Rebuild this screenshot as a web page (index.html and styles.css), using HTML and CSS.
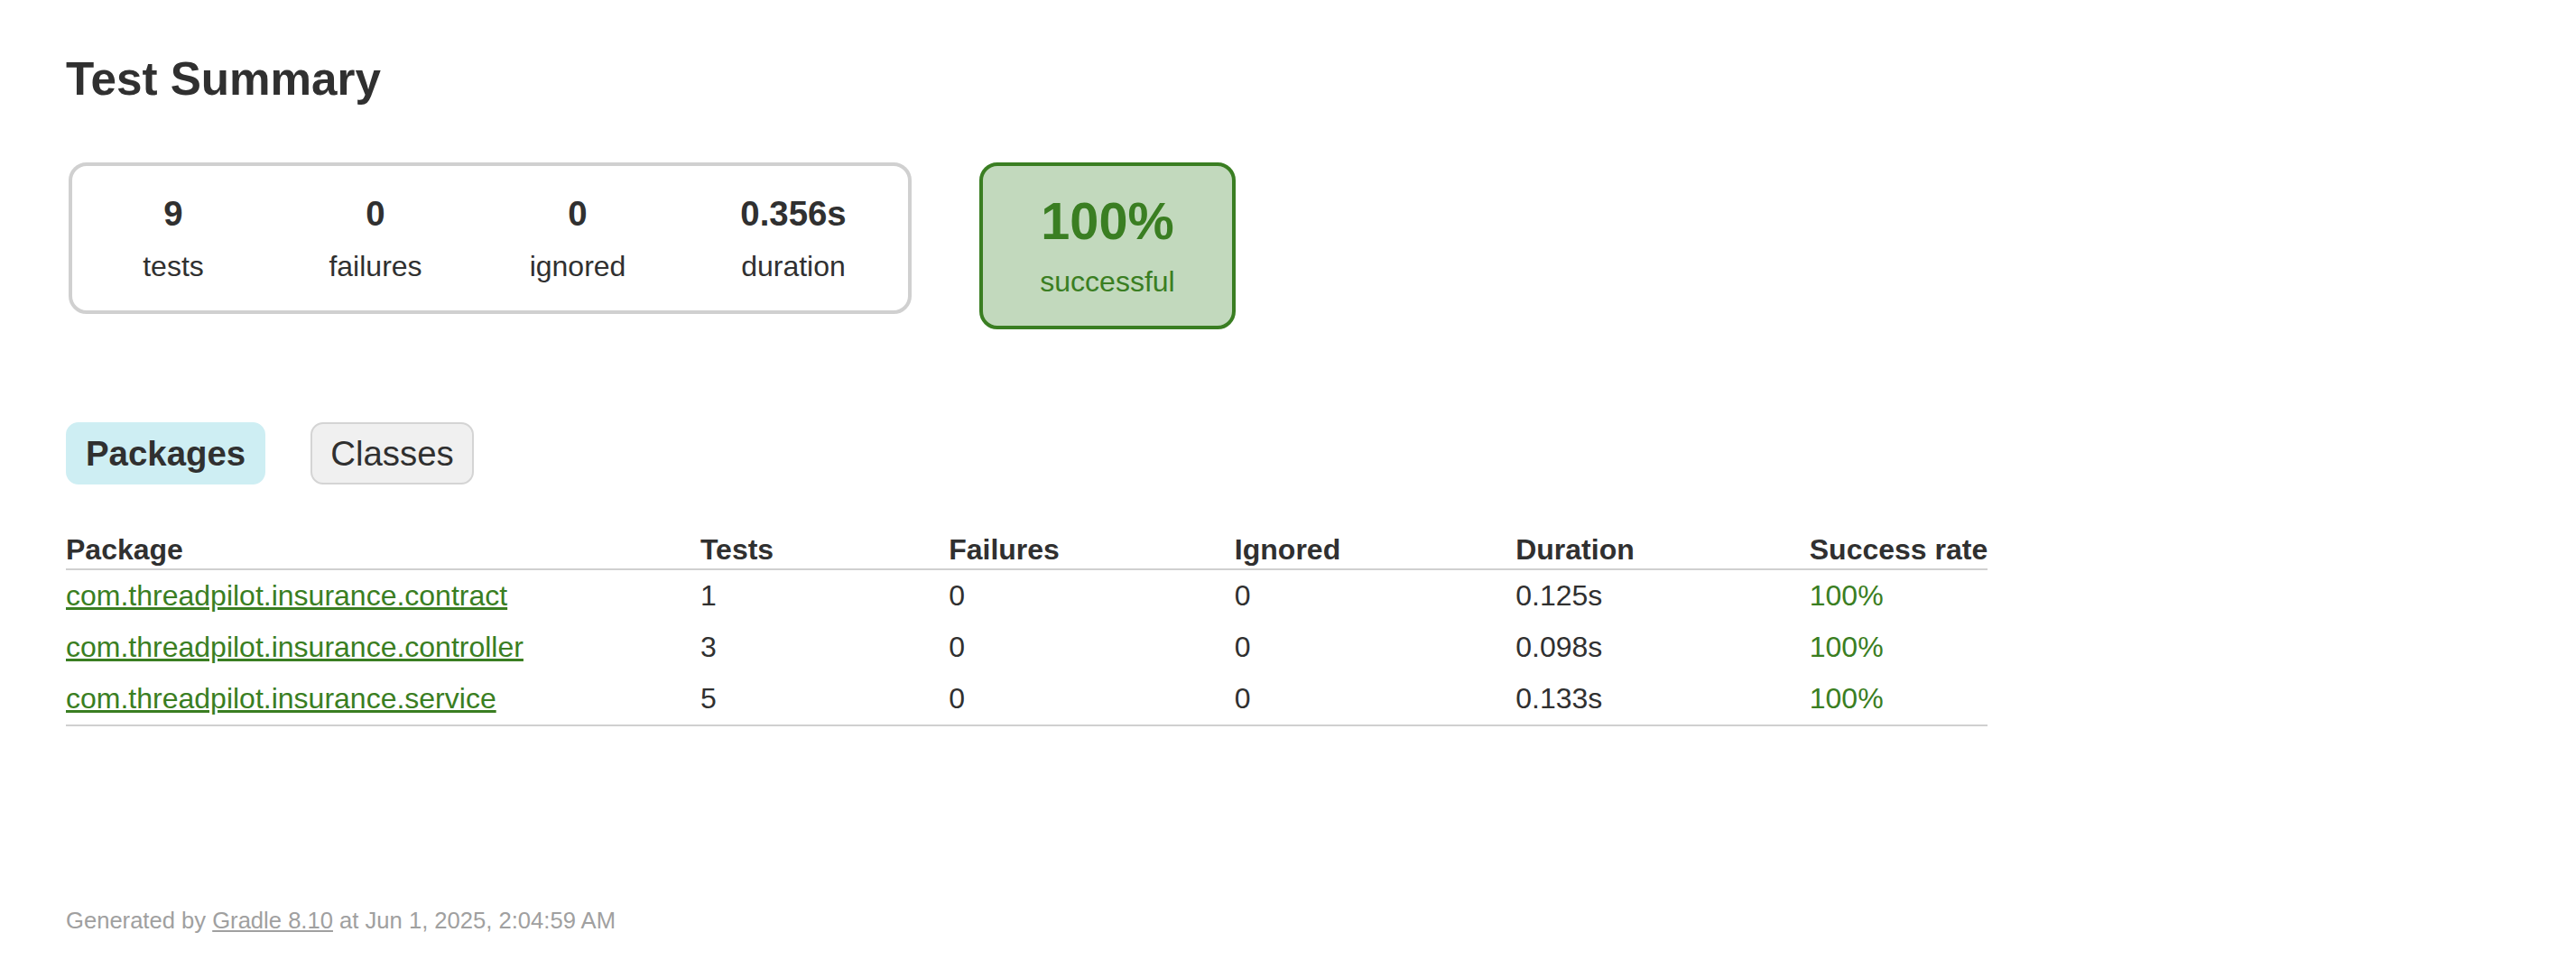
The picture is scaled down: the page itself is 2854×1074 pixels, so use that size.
FILE: index.html
```html
<!DOCTYPE html>
<html>
<head>
<meta charset="utf-8">
<title>Test results - Test Summary</title>
<link rel="stylesheet" href="styles.css">
</head>
<body>
<div id="content">
  <h1>Test Summary</h1>
  <div id="summary">
    <div class="summaryGroup">
      <div class="infoBox"><div class="counter">9</div><p>tests</p></div>
      <div class="infoBox"><div class="counter">0</div><p>failures</p></div>
      <div class="infoBox"><div class="counter">0</div><p>ignored</p></div>
      <div class="infoBox duration"><div class="counter">0.356s</div><p>duration</p></div>
    </div>
    <div class="infoBox successRate"><div class="percent">100%</div><p>successful</p></div>
  </div>
  <ul class="tabLinks">
    <li class="selected"><h2>Packages</h2></li>
    <li><a href="#tab1">Classes</a></li>
  </ul>
  <div class="tab">
    <table>
      <thead>
        <tr>
          <th>Package</th>
          <th>Tests</th>
          <th>Failures</th>
          <th>Ignored</th>
          <th>Duration</th>
          <th>Success rate</th>
        </tr>
      </thead>
      <tbody>
        <tr>
          <td class="success"><a href="#p1">com.threadpilot.insurance.contract</a></td>
          <td>1</td>
          <td>0</td>
          <td>0</td>
          <td>0.125s</td>
          <td class="success">100%</td>
        </tr>
        <tr>
          <td class="success"><a href="#p2">com.threadpilot.insurance.controller</a></td>
          <td>3</td>
          <td>0</td>
          <td>0</td>
          <td>0.098s</td>
          <td class="success">100%</td>
        </tr>
        <tr>
          <td class="success"><a href="#p3">com.threadpilot.insurance.service</a></td>
          <td>5</td>
          <td>0</td>
          <td>0</td>
          <td>0.133s</td>
          <td class="success">100%</td>
        </tr>
      </tbody>
    </table>
  </div>
  <div id="footer">Generated by <a href="#gradle">Gradle 8.10</a> at Jun 1, 2025, 2:04:59 AM</div>
</div>
</body>
</html>
```

FILE: styles.css
```css
html, body {
  margin: 0;
  padding: 0;
  background: #ffffff;
}

body {
  font-family: "Liberation Sans", Arial, Helvetica, sans-serif;
  font-size: 32px;
  color: #303030;
}

a, a:visited {
  color: #303030;
}

#content {
  padding: 58px 73px 0 73px;
}

h1 {
  margin: 0;
  font-size: 51.2px;
  line-height: 59px;
  font-weight: bold;
  white-space: nowrap;
}

#summary {
  display: flex;
  align-items: flex-start;
  margin-top: 63px;
  margin-bottom: 83px;
  padding-left: 3px;
}

.summaryGroup {
  display: flex;
  border: solid 4px #d0d0d0;
  border-radius: 20px;
}

.infoBox {
  width: 224px;
  padding-top: 30px;
  padding-bottom: 30px;
  text-align: center;
}

.infoBox p {
  margin: 0;
  line-height: 38px;
}

.infoBox.duration {
  width: 254px;
}

.counter {
  font-size: 38.4px;
  line-height: 46px;
  font-weight: bold;
  margin-bottom: 16px;
}

.successRate {
  width: 276px;
  margin-left: 75px;
  border: solid 4px #3a7e22;
  border-radius: 20px;
  background-color: #c2d9bd;
  color: #3a7e22;
}

.percent {
  font-size: 57.6px;
  line-height: 63px;
  font-weight: bold;
  margin-bottom: 16px;
}

ul.tabLinks {
  display: flex;
  margin: 0 0 29px 0;
  padding: 20px 0;
  list-style: none;
}

ul.tabLinks li {
  padding: 10px 20px;
  margin-right: 50px;
  border: solid 2px #d4d4d4;
  border-radius: 14px;
  background-color: #f0f0f0;
}

ul.tabLinks li.selected {
  background-color: #ceeef3;
  border-color: #ceeef3;
}

ul.tabLinks li h2 {
  margin: 0;
  padding: 0;
  font-size: 38.4px;
  line-height: 45px;
  font-weight: bold;
  white-space: nowrap;
}

ul.tabLinks a {
  display: block;
  font-size: 38.4px;
  line-height: 45px;
  text-decoration: none;
  color: #303030;
}

div.tab table {
  border-collapse: collapse;
  border-bottom: solid 2px #d0d0d0;
}

div.tab th {
  text-align: left;
  white-space: nowrap;
  font-weight: bold;
  line-height: 37px;
  padding: 5px 0 2px 194px;
  border-bottom: solid 2px #d0d0d0;
}

div.tab td {
  white-space: nowrap;
  line-height: 37px;
  padding: 10px 0 10px 194px;
}

div.tab th:first-child,
div.tab td:first-child {
  padding-left: 0;
}

div.tab td:first-child {
  padding-right: 2px;
}

.success, .success a, .success a:visited {
  color: #3a7e22;
}

#footer {
  margin-top: 201px;
  font-size: 25.6px;
  white-space: nowrap;
  color: #a0a0a0;
}

#footer a, #footer a:visited {
  color: #a0a0a0;
}
```
